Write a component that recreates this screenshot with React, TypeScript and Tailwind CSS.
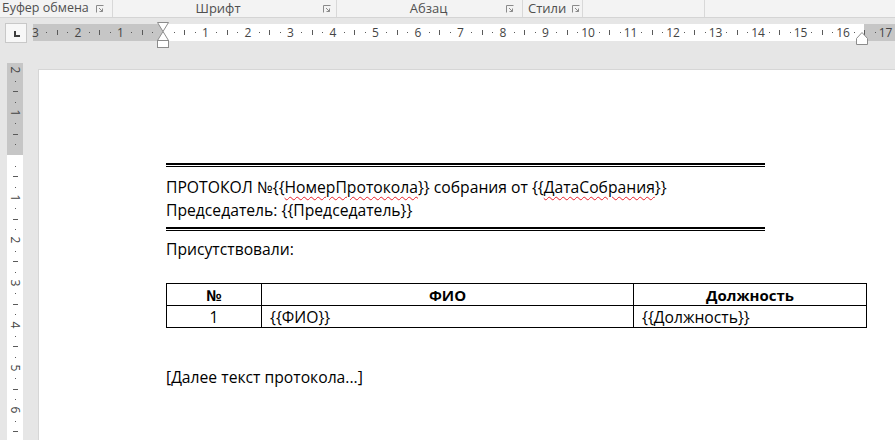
import React from "react";

const CM = 42.5;
const H_ORIGIN = 130; // offset of ruler zero inside horizontal ruler (x=163)
const V_ORIGIN = 92; // offset of ruler zero inside vertical ruler (y=155)

function Launcher() {
  return (
    <svg width="8" height="8" viewBox="0 0 8 8" className="shrink-0">
      <path d="M0.5 7.5V0.5H7.5" fill="none" stroke="#8a8a8a" strokeWidth="1" />
      <path d="M3 3L6.5 6.5M6.5 3.5V6.5H3.5" fill="none" stroke="#8a8a8a" strokeWidth="1" />
    </svg>
  );
}

function HRuler() {
  const marks: React.ReactNode[] = [];
  for (let k = -12; k <= 69; k++) {
    const x = H_ORIGIN + (k * CM) / 4;
    if (k === 0) continue;
    const m = ((k % 4) + 4) % 4;
    if (m === 0) {
      marks.push(
        <span
          key={k}
          className="absolute top-1/2 -translate-x-1/2 -translate-y-1/2 text-[12px] leading-none text-[#444]"
          style={{ left: x }}
        >
          {Math.abs(k / 4)}
        </span>
      );
    } else if (m === 2) {
      marks.push(
        <span
          key={k}
          className="absolute top-[6px] h-[5px] w-px bg-[#5a5a5a]"
          style={{ left: Math.round(x) }}
        />
      );
    } else {
      marks.push(
        <span
          key={k}
          className="absolute top-[8px] h-px w-px bg-[#5a5a5a]"
          style={{ left: Math.round(x) }}
        />
      );
    }
  }
  return (
    <div className="relative mt-[6px] h-[17px] flex-1">
      <div className="flex h-full">
        <div className="w-[130px] bg-[#c6c6c6]" />
        <div className="w-[701px] bg-white" />
        <div className="flex-1 bg-[#c6c6c6]" />
      </div>
      {marks}
      <svg
        width="12"
        height="27"
        viewBox="0 0 12 27"
        className="absolute left-[124px] top-[-2px]"
      >
        <path d="M0.5 0.5H11.5L6 9.5Z" fill="#fff" stroke="#8c8c8c" />
        <path d="M6 9.5L11.5 18.5H0.5Z" fill="#fff" stroke="#8c8c8c" />
        <rect x="0.5" y="18.5" width="11" height="7" fill="#fff" stroke="#8c8c8c" />
      </svg>
      <svg
        width="12"
        height="13"
        viewBox="0 0 12 13"
        className="absolute left-[823px] top-[8px]"
      >
        <path d="M6 0.5L11.5 6.5V12.5H0.5V6.5Z" fill="#fff" stroke="#8c8c8c" />
      </svg>
    </div>
  );
}

function VRuler() {
  const marks: React.ReactNode[] = [];
  for (let k = -8; k <= 27; k++) {
    const y = V_ORIGIN + (k * CM) / 4;
    if (k === 0) continue;
    const m = ((k % 4) + 4) % 4;
    if (m === 0) {
      marks.push(
        <span
          key={k}
          className="absolute left-1/2 -translate-x-1/2 -translate-y-1/2 rotate-90 text-[12px] leading-none text-[#444]"
          style={{ top: y }}
        >
          {Math.abs(k / 4)}
        </span>
      );
    } else if (m === 2) {
      marks.push(
        <span
          key={k}
          className="absolute left-[6px] h-px w-[5px] bg-[#5a5a5a]"
          style={{ top: Math.round(y) }}
        />
      );
    } else {
      marks.push(
        <span
          key={k}
          className="absolute left-[8px] h-px w-px bg-[#5a5a5a]"
          style={{ top: Math.round(y) }}
        />
      );
    }
  }
  return (
    <div className="relative ml-[7px] w-[16px] self-stretch">
      <div className="flex h-full flex-col">
        <div className="h-[92px] bg-[#c6c6c6]" />
        <div className="flex-1 bg-white" />
      </div>
      {marks}
    </div>
  );
}

function DoubleRule() {
  return (
    <div className="w-[599px]">
      <div className="h-[2px] bg-black" />
      <div className="h-px" />
      <div className="h-px bg-black" />
    </div>
  );
}

const squiggle =
  "underline decoration-wavy decoration-[#e8202a] decoration-1 underline-offset-[3px]";

export default function App() {
  return (
    <div
      className="flex h-[440px] w-[895px] flex-col overflow-hidden bg-[#e6e6e6]"
      style={{ fontFamily: "'Open Sans', 'Noto Sans', sans-serif" }}
    >
      {/* ribbon group labels */}
      <div className="flex h-[18px] shrink-0 items-center border-b border-[#d4d4d4] bg-[#f3f3f3] text-[12.5px] leading-none text-[#505050]">
        <div className="flex h-full w-[113px] items-center border-r border-[#d8d8d8] pl-[2px] pr-[8px]">
          <span className="flex-1 whitespace-nowrap">Буфер обмена</span>
          <Launcher />
        </div>
        <div className="flex h-full w-[224px] items-center border-r border-[#d8d8d8] pr-[5px]">
          <span className="flex-1 text-center text-[13px]">Шрифт</span>
          <Launcher />
        </div>
        <div className="flex h-full w-[186px] items-center border-r border-[#d8d8d8] pr-[8px]">
          <span className="flex-1 pl-[14px] text-center text-[13px]">Абзац</span>
          <Launcher />
        </div>
        <div className="flex h-full w-[60px] items-center gap-[6px] border-r border-[#d8d8d8] pl-[5px]">
          <span className="text-[13px]">Стили</span>
          <Launcher />
        </div>
        <div className="h-full w-[122px] border-r border-[#d8d8d8]" />
        <div className="flex-1" />
      </div>

      {/* horizontal ruler row */}
      <div className="flex h-[45px] shrink-0 items-start">
        <div className="ml-[5px] mt-[5px] flex h-[20px] w-[22px] items-center justify-center border border-[#c8c8c8] bg-[#f7f7f7]">
          <div className="ml-[1px] mt-[2px] h-[6px] w-[6px] border-b-2 border-l-2 border-[#3c3c3c]" />
        </div>
        <div className="ml-[6px] flex flex-1">
          <HRuler />
        </div>
      </div>

      {/* body */}
      <div className="flex flex-1">
        <div className="flex w-[38px] shrink-0">
          <VRuler />
        </div>
        <div className="mt-[6px] flex-1 border-l border-t border-[#d6d6d6] bg-white pl-[127px] pt-[93px] text-[15.7px] leading-[23px] text-black">
          <DoubleRule />
          <div className="mt-[9px]">
            ПРОТОКОЛ №{"{{"}
            <span className={squiggle}>НомерПротокола</span>
            {"}}"} собрания от {"{{"}
            <span className={squiggle}>ДатаСобрания</span>
            {"}}"}
          </div>
          <div>Председатель: {"{{Председатель}}"}</div>
          <div className="mt-[5px]">
            <DoubleRule />
          </div>
          <div className="mt-[7px]">Присутствовали:</div>
          <table className="mt-[22px] w-[701px] border-collapse">
            <tbody>
              <tr className="h-[22px]">
                <th className="w-[95px] border border-black p-0 text-center text-[15px] font-bold leading-[20px]">№</th>
                <th className="w-[372px] border border-black p-0 text-center text-[15px] font-bold leading-[20px]">ФИО</th>
                <th className="border border-black p-0 text-center text-[15px] font-bold leading-[20px]">Должность</th>
              </tr>
              <tr className="h-[22px]">
                <td className="border border-black p-0 text-center leading-[20px]">1</td>
                <td className="border border-black px-[8px] py-0 leading-[20px]">{"{{ФИО}}"}</td>
                <td className="border border-black px-[8px] py-0 leading-[20px]">{"{{Должность}}"}</td>
              </tr>
            </tbody>
          </table>
          <div className="mt-[38px]">[Далее текст протокола...]</div>
        </div>
      </div>
    </div>
  );
}
